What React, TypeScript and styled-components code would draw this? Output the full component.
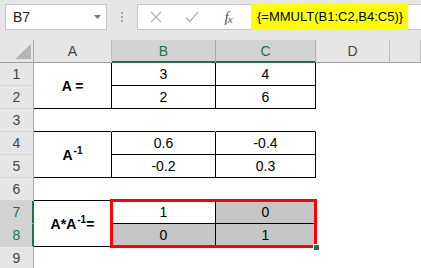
import styled, { createGlobalStyle } from "styled-components";

const GlobalStyle = createGlobalStyle`
  html, body {
    margin: 0;
    padding: 0;
    background: #fff;
    overflow: hidden;
  }
  body {
    font-family: "Liberation Sans", Arial, sans-serif;
  }
`;

const Window = styled.div`
  width: 421px;
  height: 268px;
  overflow: hidden;
  background: #fff;
`;

const Toolbar = styled.div`
  display: flex;
  align-items: flex-start;
  height: 40px;
  box-sizing: border-box;
  padding: 4px 0 0 5px;
  background: #e6e6e6;
`;

const NameBox = styled.div`
  width: 102px;
  height: 26px;
  box-sizing: border-box;
  border: 1px solid #c6c6c6;
  background: #fff;
  display: flex;
  align-items: center;
  justify-content: space-between;
  padding: 0 5px 0 7px;
  font-size: 14px;
  color: #222;
`;

const Grip = styled.div`
  width: 30px;
  height: 26px;
  display: flex;
  flex-direction: column;
  align-items: center;
  justify-content: center;
  gap: 2px;
`;

const Dot = styled.span`
  width: 2px;
  height: 2px;
  background: #a6a6a6;
`;

const FormulaBox = styled.div`
  flex: 1;
  height: 26px;
  box-sizing: border-box;
  border: 1px solid #c6c6c6;
  border-right: none;
  background: #fff;
  display: flex;
  align-items: stretch;
`;

const IconSlot = styled.div`
  width: 36px;
  display: flex;
  align-items: center;
  justify-content: center;
`;

const Fx = styled.span`
  font-family: "Liberation Serif", "Times New Roman", serif;
  font-style: italic;
  font-size: 15px;
  color: #555;
  letter-spacing: -1px;
  sub {
    font-size: 11px;
    vertical-align: -1px;
  }
`;

const Formula = styled.div`
  margin: -1px 0 -1px 5px;
  padding: 0 5px 0 6px;
  background: #ffff00;
  font-size: 13px;
  line-height: 26px;
  color: #000;
  white-space: nowrap;
`;

const Sheet = styled.div`
  display: grid;
  grid-template-columns: 34px 78px 104px 100px 74px 1fr;
  grid-auto-rows: 23px;
  font-size: 14px;
`;

const Corner = styled.div`
  box-sizing: border-box;
  background: #e6e6e6;
  border-right: 1px solid #ababab;
  border-bottom: 1px solid #9b9b9b;
  display: flex;
  align-items: flex-end;
  justify-content: flex-end;
  padding: 0 2px 3px 0;
`;

const ColHead = styled.div<{ $sel?: boolean }>`
  box-sizing: border-box;
  background: ${(p) => (p.$sel ? "#d2d2d2" : "#e6e6e6")};
  color: ${(p) => (p.$sel ? "#217346" : "#444")};
  border-right: 1px solid ${(p) => (p.$sel ? "#ababab" : "#bdbdbd")};
  border-bottom: ${(p) => (p.$sel ? "2px solid #217346" : "1px solid #9b9b9b")};
  display: flex;
  align-items: center;
  justify-content: center;
  padding-top: ${(p) => (p.$sel ? "1px" : "0")};
`;

const RowHead = styled.div<{ $sel?: boolean }>`
  box-sizing: border-box;
  background: ${(p) => (p.$sel ? "#d2d2d2" : "#e6e6e6")};
  color: ${(p) => (p.$sel ? "#217346" : "#444")};
  border-right: ${(p) => (p.$sel ? "2px solid #217346" : "1px solid #ababab")};
  border-bottom: 1px solid #d4d4d4;
  display: flex;
  align-items: center;
  justify-content: center;
  padding-left: ${(p) => (p.$sel ? "1px" : "0")};
`;

const Cell = styled.div<{ $right?: boolean; $bottom?: boolean; $fill?: string; $bold?: boolean; $span?: number }>`
  box-sizing: border-box;
  grid-row: span ${(p) => p.$span ?? 1};
  background: ${(p) => p.$fill ?? "#fff"};
  border-right: 1px solid ${(p) => (p.$right ? "#000" : "transparent")};
  border-bottom: 1px solid ${(p) => (p.$bottom ? "#000" : "transparent")};
  font-weight: ${(p) => (p.$bold ? 700 : 400)};
  color: #000;
  display: flex;
  align-items: center;
  justify-content: center;
  white-space: nowrap;
`;

const Label = styled.span`
  line-height: 16px;
`;

const Sup = styled.sup`
  font-size: 10px;
  line-height: 0;
  vertical-align: 6px;
  margin-left: 1px;
`;

const Range = styled.div`
  grid-column: span 2;
  grid-row: span 2;
  display: grid;
  grid-template-columns: 104px 100px;
  grid-template-rows: 23px 23px;
  position: relative;
  &::after {
    content: "";
    position: absolute;
    top: -2px;
    left: -2px;
    right: -1px;
    bottom: -1px;
    border: 3px solid #ff0000;
    pointer-events: none;
  }
`;

const FillHandle = styled.span`
  position: absolute;
  right: -3px;
  bottom: -3px;
  width: 5px;
  height: 5px;
  background: #217346;
  border-top: 1px solid #fff;
  border-left: 1px solid #fff;
  z-index: 1;
`;

const SHADE = "#c6c6c6";

function Triangle() {
  return (
    <svg width="16" height="15" viewBox="0 0 16 15">
      <polygon points="16,0 16,15 0,15" fill="#b5b5b5" />
    </svg>
  );
}

function DropArrow() {
  return (
    <svg width="7" height="4" viewBox="0 0 7 4">
      <polygon points="0,0 7,0 3.5,4" fill="#777" />
    </svg>
  );
}

function Cross() {
  return (
    <svg width="12" height="12" viewBox="0 0 12 12">
      <path d="M1 1 L11 11 M11 1 L1 11" stroke="#b3b3b3" strokeWidth="1.3" fill="none" />
    </svg>
  );
}

function Tick() {
  return (
    <svg width="14" height="12" viewBox="0 0 14 12">
      <path d="M1 6.5 L4.8 10.5 L13 1" stroke="#b3b3b3" strokeWidth="1.4" fill="none" />
    </svg>
  );
}

const columns = ["A", "B", "C", "D", ""];

export default function App() {
  return (
    <Window>
      <GlobalStyle />
      <Toolbar>
        <NameBox>
          <span>B7</span>
          <DropArrow />
        </NameBox>
        <Grip>
          <Dot />
          <Dot />
          <Dot />
        </Grip>
        <FormulaBox>
          <IconSlot>
            <Cross />
          </IconSlot>
          <IconSlot>
            <Tick />
          </IconSlot>
          <IconSlot>
            <Fx>
              f<sub>x</sub>
            </Fx>
          </IconSlot>
          <Formula>{"{=MMULT(B1:C2,B4:C5)}"}</Formula>
        </FormulaBox>
      </Toolbar>

      <Sheet>
        <Corner>
          <Triangle />
        </Corner>
        {columns.map((c, i) => (
          <ColHead key={i} $sel={c === "B" || c === "C"}>
            {c}
          </ColHead>
        ))}

        {/* row 1 */}
        <RowHead>1</RowHead>
        <Cell $span={2} $right $bottom $bold>
          A =
        </Cell>
        <Cell $right $bottom>3</Cell>
        <Cell $right $bottom>4</Cell>
        <Cell />
        <Cell />

        {/* row 2 */}
        <RowHead>2</RowHead>
        <Cell $right $bottom>2</Cell>
        <Cell $right $bottom>6</Cell>
        <Cell />
        <Cell />

        {/* row 3 */}
        <RowHead>3</RowHead>
        <Cell $bottom />
        <Cell $bottom />
        <Cell $bottom />
        <Cell />
        <Cell />

        {/* row 4 */}
        <RowHead>4</RowHead>
        <Cell $span={2} $right $bottom $bold>
          <Label>
            A<Sup>-1</Sup>
          </Label>
        </Cell>
        <Cell $right $bottom>0.6</Cell>
        <Cell $right $bottom>-0.4</Cell>
        <Cell />
        <Cell />

        {/* row 5 */}
        <RowHead>5</RowHead>
        <Cell $right $bottom>-0.2</Cell>
        <Cell $right $bottom>0.3</Cell>
        <Cell />
        <Cell />

        {/* row 6 */}
        <RowHead>6</RowHead>
        <Cell $bottom />
        <Cell $bottom />
        <Cell $bottom />
        <Cell />
        <Cell />

        {/* row 7 */}
        <RowHead $sel>7</RowHead>
        <Cell $span={2} $right $bottom $bold>
          <Label>
            A*A<Sup>-1</Sup>=
          </Label>
        </Cell>
        <Range>
          <Cell $right $bottom>1</Cell>
          <Cell $right $bottom $fill={SHADE}>0</Cell>
          <Cell $right $bottom $fill={SHADE}>0</Cell>
          <Cell $right $bottom $fill={SHADE}>1</Cell>
          <FillHandle />
        </Range>
        <Cell />
        <Cell />

        {/* row 8 */}
        <RowHead $sel>8</RowHead>
        <Cell />
        <Cell />

        {/* row 9 */}
        <RowHead>9</RowHead>
        <Cell />
        <Cell />
        <Cell />
        <Cell />
        <Cell />
      </Sheet>
    </Window>
  );
}
